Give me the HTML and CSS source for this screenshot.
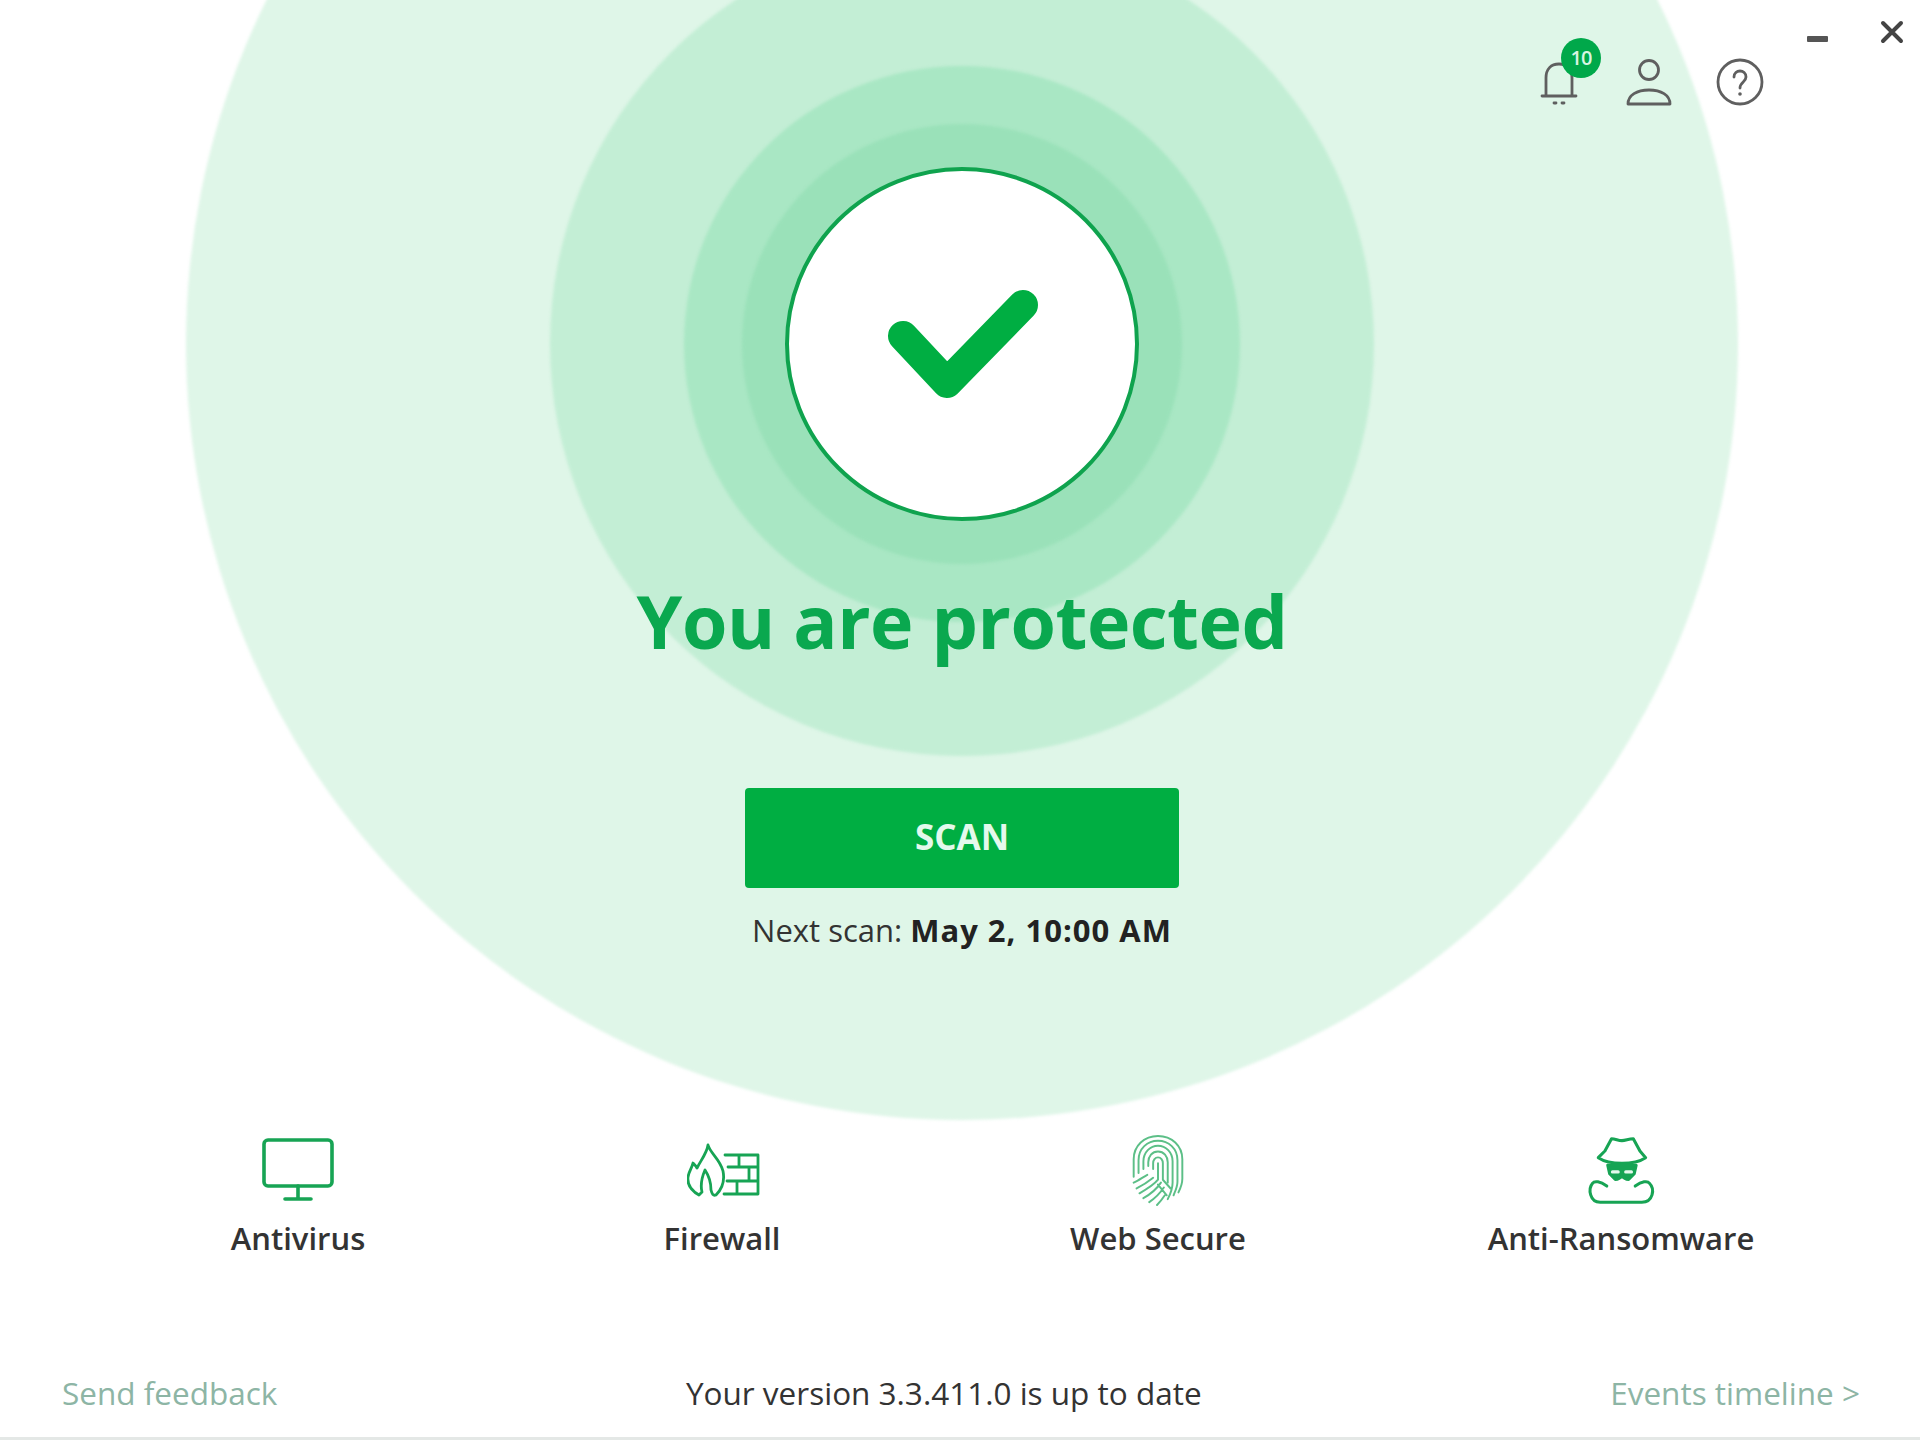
FILE: index.html
```html
<!DOCTYPE html>
<html lang="en">
<head>
    <meta charset="UTF-8">
    <title>You are protected</title>
    <link rel="stylesheet" href="styles.css">
</head>
<body>
    <div class="app">
        <!-- background rings -->
        <div class="ring ring-1"></div>
        <div class="ring ring-2"></div>
        <div class="ring ring-3"></div>
        <div class="ring ring-4"></div>

        <header class="topbar">
            <div class="bell">
                <svg class="top-icon" width="40" height="52" viewBox="0 0 40 52" fill="none" stroke="#5f5f5f" stroke-width="2.8" stroke-linecap="round">
                    <path d="M7 39V22C7 13 12 8 20 8s13 5 13 14v17"/>
                    <path d="M3 40h34"/>
                    <path d="M15 47h2M23 47h2"/>
                </svg>
                <span class="badge">10</span>
            </div>
            <svg class="top-icon" width="48" height="52" viewBox="0 0 48 52" fill="none" stroke="#5f5f5f" stroke-width="2.8">
                <circle cx="24" cy="14" r="9.5"/>
                <path d="M3 48c0-9 9-14 21-14s21 5 21 14z" stroke-linejoin="round"/>
            </svg>
            <svg class="top-icon help" width="48" height="48" viewBox="0 0 48 48" fill="none" stroke="#5f5f5f" stroke-width="2.8">
                <circle cx="24" cy="24" r="22"/>
                <path d="M18 19c0-4 3-6 6-6s6 2 6 6c0 5-6 5-6 11" stroke-linecap="round"/>
                <circle cx="24" cy="36" r="1.8" fill="#5f5f5f" stroke="none"/>
            </svg>
            <div class="min-btn"></div>
            <svg class="close-btn" width="24" height="24" viewBox="0 0 24 24" stroke="#444" stroke-width="4" stroke-linecap="round">
                <path d="M3 3l18 18M21 3L3 21"/>
            </svg>
        </header>

        <main class="hero">
            <div class="status-circle">
                <svg width="154" height="108" viewBox="0 0 154 108" fill="none" stroke="#00ae42" stroke-width="30" stroke-linecap="round" stroke-linejoin="round">
                    <path d="M18 47l44 47L138 16"/>
                </svg>
            </div>
            <h1>You are protected</h1>
            <button class="scan-btn">SCAN</button>
            <p class="next-scan">Next scan: <b>May 2, 10:00 AM</b></p>
        </main>

        <section class="features">
            <div class="feature">
                <svg class="icon-monitor" width="72" height="64" viewBox="0 0 72 64" fill="none" stroke="#17a454" stroke-width="3.6" stroke-linecap="round" stroke-linejoin="round">
                    <rect x="2" y="2" width="68" height="46" rx="4"/>
                    <path d="M36 48v13M23 61h26"/>
                </svg>
                <span>Antivirus</span>
            </div>
            <div class="feature">
                <svg class="icon-firewall" width="74" height="54" viewBox="0 0 74 54" fill="none" stroke="#17a454" stroke-width="2.8" stroke-linecap="round" stroke-linejoin="round">
                    <path d="M21 2c2 8 12 14 15 26 2 10-1 18-7 24-3 1-4-1-5-5 0-8-2-14-6-20-3 7-5 14-3 22l-3 3C5 48 0 42 1 34c1-6 4-9 5-14 2 2 3 3 4 5 4-8 10-15 11-23z"/>
                    <path d="M38 12h33v39H37M41 24h30M40 38h31M52 12v12M62 24v14M50 38v13"/>
                </svg>
                <span>Firewall</span>
            </div>
            <div class="feature">
                <svg class="icon-print" width="56" height="74" viewBox="0 0 56 74" fill="none" stroke="#5cbf87" stroke-width="2" stroke-linecap="round">
                    <path d="M3 44V26C3 12 14 2 28 2s25 10 25 24v20c0 6-2 10-4 14"/>
                    <path d="M8 40V27C8 15 17 7 28 7s20 8 20 20v22c0 5-2 9-4 14"/>
                    <path d="M13 36v-8c0-9 7-16 15-16s15 7 15 16v22c0 6-2 11-5 17"/>
                    <path d="M18 33v-4c0-6 4-11 10-11s10 5 10 11v21"/>
                    <path d="M23 36v-6c0-3 2-6 5-6s5 3 5 6v16M28 30v16"/>
                    <path d="M3 50c5-2 10-6 14-8M6 56c6-3 12-7 17-11M9 61c7-4 15-9 19-14M13 66c7-4 14-10 18-16M19 70c6-4 11-9 15-15M27 73c3-3 6-7 8-10M33 47l8 9M28 52l9 11"/>
                </svg>
                <span>Web Secure</span>
            </div>
            <div class="feature">
                <svg class="icon-spy" width="72" height="76" viewBox="0 0 72 76" fill="none" stroke="#17a454" stroke-width="3.2" stroke-linecap="round" stroke-linejoin="round">
                    <path d="M26 5c4 0 7 2 11 2s7-2 12-2l7 13 6 7c-6 4-15 6-25 6s-19-2-25-6l7-7z"/>
                    <path d="M22 33h30l-2 9-6 6c-3 0-5-1-7-4-2 3-4 4-7 4l-6-6z" fill="#17a454"/>
                    <path d="M27 40h6M41 40h6" stroke="#e4f9ec" stroke-width="3.4"/>
                    <path d="M21 55c-7-5-13-6-15-3-5 6-3 20 8 20h44c12 0 14-14 8-20-2-3-8-2-15 3"/>
                </svg>
                <span>Anti-Ransomware</span>
            </div>
        </section>

        <footer class="bottom">
            <a class="link">Send feedback</a>
            <span class="version">Your version 3.3.411.0 is up to date</span>
            <a class="link">Events timeline &gt;</a>
        </footer>
    </div>
</body>
</html>
```

FILE: styles.css
```css
/* Basic styling */
html, body { margin: 0; padding: 0; }
body { font-family: "Open Sans", "Noto Sans", sans-serif; color: #2b2b2b; background: #fff; }

.app { position: relative; width: 1920px; height: 1440px; overflow: hidden; background: #fff; display: flex; flex-direction: column; box-sizing: border-box; border-bottom: 3px solid #e4e8e6; }

/* rings sit behind everything, all centered on the status circle */
.ring { position: absolute; border-radius: 50%; filter: blur(1.5px); }
.ring-1 { width: 1552px; height: 1552px; left: 186px; top: -432px; background: #dff6e8; }
.ring-2 { width: 824px; height: 824px; left: 550px; top: -68px; background: #c3eed5; }
.ring-3 { width: 556px; height: 556px; left: 684px; top: 66px; background: #a9e7c4; }
.ring-4 { width: 440px; height: 440px; left: 742px; top: 124px; background: #9ae1b9; }

.topbar { position: relative; height: 110px; display: flex; align-items: flex-start; box-sizing: border-box; padding: 56px 16px 0 1539px; }
.bell { position: relative; width: 40px; height: 52px; }
.badge { position: absolute; left: 22px; top: -18px; width: 40px; height: 40px; border-radius: 50%; background: #00a84a; color: #d8f5e2; font-size: 20px; font-weight: 600; line-height: 40px; text-align: center; letter-spacing: -1px; }
.top-icon { display: block; flex: none; }
.bell + .top-icon { margin-left: 46px; }
.help { margin-left: 43px; margin-top: 2px; }
.min-btn { width: 22px; height: 6px; background: #555; margin: -20px 0 0 43px; border-radius: 1px; }
.close-btn { margin: -36px 0 0 52px; flex: none; }

.hero { position: relative; display: flex; flex-direction: column; align-items: center; margin-top: 57px; padding-left: 4px; }
.status-circle { width: 354px; height: 354px; box-sizing: border-box; border: 4px solid #0fa34e; border-radius: 50%; background: #fff; display: flex; align-items: center; justify-content: center; }
.status-circle svg { margin-top: -2px; overflow: visible; }
.hero h1 { margin: 48px 0 0; font-size: 73.5px; line-height: 104px; font-weight: 700; color: #0aa84f; letter-spacing: -0.5px; }
.scan-btn { width: 434px; height: 100px; margin-top: 115px; padding: 0 0 3px; border: 0; border-radius: 4px; background: #00ae42; color: #e4f9ec; font-family: inherit; font-size: 35px; font-weight: 700; }
.next-scan { margin: 22px 0 0; font-size: 31px; line-height: 40px; color: #333; }
.next-scan b { font-weight: 700; color: #222; letter-spacing: 1px; }

.features { position: absolute; left: 100px; top: 1134px; display: grid; grid-template-columns: 396px 452px 420px 506px; }
.feature { display: flex; flex-direction: column; align-items: center; height: 124px; justify-content: flex-end; gap: 12px; font-size: 31px; line-height: 40px; font-weight: 600; color: #333; }
.feature svg { display: block; }
.icon-monitor { margin-bottom: 4px; }
.icon-firewall { margin-bottom: 9px; margin-left: 3px; }

.bottom { position: absolute; left: 62px; right: 60px; top: 1373px; display: flex; justify-content: space-between; font-size: 31.5px; line-height: 40px; }
.link { color: #8db5a5; }
.version { color: #333; }
```
